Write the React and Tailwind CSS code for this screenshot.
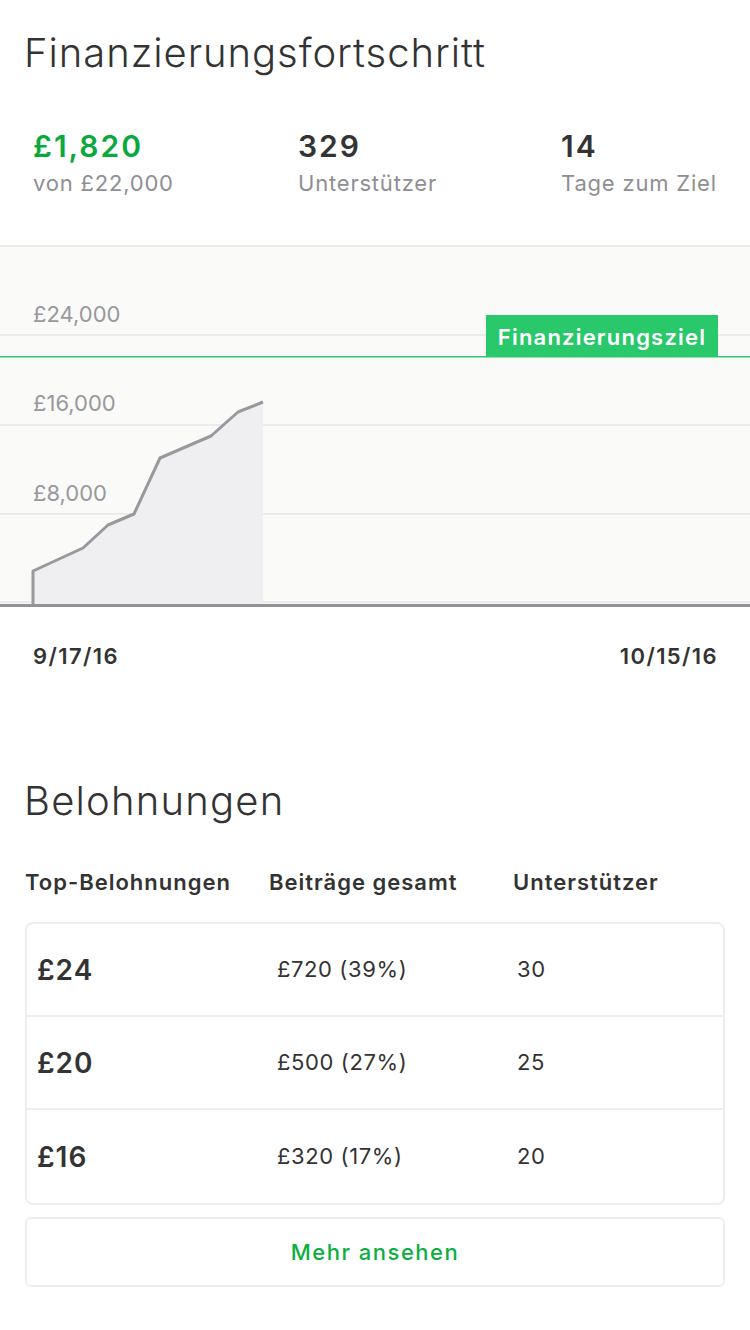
import React from "react";

const FONT = { fontFamily: "Inter, 'Noto Sans', sans-serif" };

function Stat({ value, label, green, w }) {
  return (
    <div className={"shrink-0 flex flex-col " + w}>
      <div
        className={
          "text-[30px] leading-[36px] font-semibold tracking-[2px] " +
          (green ? "text-[#0aa83d]" : "text-[#333333]")
        }
      >
        {value}
      </div>
      <div className="mt-[5px] text-[22px] leading-[28px] text-[#8e8e93] tracking-[0.8px]">
        {label}
      </div>
    </div>
  );
}

function Chart() {
  const o = 245;
  const pts = [
    [33, 571],
    [83, 548],
    [108, 525],
    [134, 514],
    [160, 458],
    [211, 436],
    [238, 412],
    [263, 402],
  ];
  const line = [[33, 605], ...pts].map(([x, y]) => `${x},${y - o}`).join(" ");
  const area = [[33, 604], ...pts, [263, 604]].map(([x, y]) => `${x},${y - o}`).join(" ");
  const labels = [
    ["£24,000", 322],
    ["£16,000", 411],
    ["£8,000", 501],
  ];
  return (
    <svg width="750" height="365" viewBox="0 0 750 365" className="block">
      <rect x="0" y="0" width="750" height="2" fill="#ebebeb" />
      <rect x="0" y="2" width="750" height="358" fill="#fafaf8" />
      {[335, 425, 514, 602].map((y) => (
        <rect key={y} x="0" y={y - o - 1} width="750" height="2" fill="#ebebea" />
      ))}
      <polygon points={area} fill="#efeff2" />
      <polyline
        points={line}
        fill="none"
        stroke="#98989d"
        strokeWidth="3"
        strokeLinejoin="round"
      />
      <rect x="0" y={604 - o} width="750" height="3" fill="#919196" />
      <rect x="0" y={356 - o} width="750" height="1.5" fill="#2ccb6c" />
      <rect x="486" y={315 - o} width="232" height="42" fill="#29c86a" />
      <text
        x="602"
        y={345 - o}
        textAnchor="middle"
        fill="#ffffff"
        fontSize="22"
        fontWeight="600"
        letterSpacing="1.2"
        style={FONT}
      >
        Finanzierungsziel
      </text>
      {labels.map(([t, y]) => (
        <text key={t} x="33" y={y - o} fill="#98989d" fontSize="22" style={FONT}>
          {t}
        </text>
      ))}
    </svg>
  );
}

function Row({ amount, total, count, last }) {
  return (
    <div
      className={
        "flex items-center h-[93px] pl-[10px] " +
        (last ? "" : "border-b-2 border-[#eeeef2]")
      }
    >
      <div className="w-[240px] shrink-0 text-[28px] font-semibold text-[#333333] tracking-[1px]">
        {amount}
      </div>
      <div className="w-[240px] shrink-0 text-[22px] text-[#333333] tracking-[0.6px]">{total}</div>
      <div className="text-[22px] text-[#333333] tracking-[0.6px]">{count}</div>
    </div>
  );
}

export default function App() {
  return (
    <div className="w-[750px] h-[1330px] bg-white overflow-hidden" style={FONT}>
      <div className="pt-[29px] pl-[24px] text-[40px] leading-[48px] font-light text-[#333333] tracking-[0.95px]">
        Finanzierungsfortschritt
      </div>
      <div className="flex pl-[33px] pt-[51px] h-[168px] overflow-hidden">
        <Stat value="£1,820" label="von £22,000" green w="w-[265px]" />
        <Stat value="329" label="Unterstützer" w="w-[263px]" />
        <Stat value="14" label="Tage zum Ziel" w="w-[189px]" />
      </div>
      <Chart />
      <div className="flex justify-between pl-[33px] pr-[32px] pt-[32px] text-[22px] leading-[28px] font-semibold text-[#333333] tracking-[1.4px]">
        <span>9/17/16</span>
        <span>10/15/16</span>
      </div>
      <div className="mt-[107px] pl-[24px] text-[40px] leading-[48px] font-light text-[#333333] tracking-[1.2px]">
        Belohnungen
      </div>
      <div className="mt-[43px] flex pl-[25px] text-[22px] leading-[28px] font-semibold text-[#333333] tracking-[1px]">
        <div className="w-[244px] shrink-0">Top-Belohnungen</div>
        <div className="w-[244px] shrink-0">Beiträge gesamt</div>
        <div>Unterstützer</div>
      </div>
      <div className="mx-[25px] mt-[26px] border-2 border-[#eeeef2] rounded-[8px]">
        <Row amount="£24" total="£720 (39%)" count="30" />
        <Row amount="£20" total="£500 (27%)" count="25" />
        <Row amount="£16" total="£320 (17%)" count="20" last />
      </div>
      <div className="mx-[25px] mt-[12px] h-[70px] border-2 border-[#eeeef2] rounded-[6px] flex items-center justify-center text-[22px] font-medium text-[#0cae3f] tracking-[1.5px]">
        Mehr ansehen
      </div>
    </div>
  );
}
